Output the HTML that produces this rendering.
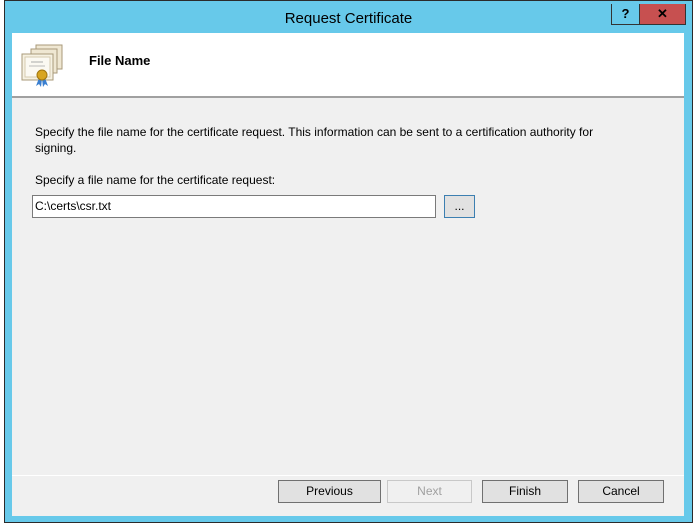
<!DOCTYPE html><html><head><style>
body{margin:0;width:696px;height:530px;background:#fff;position:relative;overflow:hidden;font-family:"Liberation Sans",sans-serif;font-size:12px;color:#000}
.win{position:absolute;left:4px;top:0;width:687px;height:521px;background:#67c9ea;border:1px solid #2b2b2b}
.title{position:absolute;left:0;top:9px;width:687px;text-align:center;font-size:15px;color:#000}
.help{position:absolute;left:606px;top:3px;width:27px;height:20px;border:1px solid #333;border-top:none;text-align:center;font-weight:bold;font-size:13px;line-height:20px}
.close{position:absolute;left:634px;top:3px;width:45px;height:20px;background:#c75050;border:1px solid #333;border-top:none;text-align:center;font-weight:bold;font-size:13px;line-height:20px}
.client{position:absolute;left:12px;top:33px;width:672px;height:483px;background:#f0f0f0}
.hdr{position:absolute;left:0;top:0;width:672px;height:63px;background:#fff;border-bottom:2px solid #a0a0a0}
.t{position:absolute;white-space:nowrap}
.btn{position:absolute;top:447px;height:21px;border:1px solid #707070;background:#e1e1e1;text-align:center;line-height:21px}
</style></head><body>
<div class="win">
<div class="title">Request Certificate</div>
<div class="help">?</div><div class="close">✕</div>
</div>
<div class="client">
<div class="hdr">
<svg style="position:absolute;left:7px;top:11px" width="50" height="44" viewBox="0 0 50 44">
<rect x="17" y="1" width="26" height="24" fill="#efe7d2" stroke="#a89a7a"/>
<rect x="12" y="5" width="26" height="24" fill="#efe7d2" stroke="#a89a7a"/>
<rect x="3" y="10" width="31" height="26" fill="#f6f1e2" stroke="#a89a7a"/>
<rect x="6" y="13" width="25" height="20" fill="#fbf9f2" stroke="#d6cbb0"/>
<line x1="12" y1="18" x2="24" y2="18" stroke="#aaa"/><line x1="10" y1="22" x2="26" y2="22" stroke="#bbb"/>
<path d="M20 34 l-3 8 l3-2 l2 3 l1-8z M26 34 l3 8 l-3-2 l-2 3 l-1-8z" fill="#3a7fd0"/>
<circle cx="23" cy="31" r="5" fill="#d8a520" stroke="#a0750f"/>
</svg>
<div class="t" style="left:77px;top:20px;font-weight:bold;font-size:13px">File Name</div>
</div>
<div class="t" style="left:23px;top:92px">Specify the file name for the certificate request. This information can be sent to a certification authority for</div>
<div class="t" style="left:23px;top:108px">signing.</div>
<div class="t" style="left:23px;top:140px">Specify a file name for the certificate request:</div>
<div style="position:absolute;left:20px;top:162px;width:400px;height:21px;background:#fff;border:1px solid #7a7a7a;line-height:21px;padding-left:2px">C:\certs\csr.txt</div>
<div style="position:absolute;left:432px;top:162px;width:29px;height:21px;background:#e1e1e1;border:1px solid #3c7fb1;text-align:center;line-height:21px">...</div>
<div style="position:absolute;left:0;top:442px;width:672px;height:1px;background:#fff"></div>
<div class="btn" style="left:266px;width:101px">Previous</div>
<div class="btn" style="left:375px;width:83px;color:#a0a0a0;border-color:#c8c8c8;background:#f0f0f0">Next</div>
<div class="btn" style="left:470px;width:84px">Finish</div>
<div class="btn" style="left:566px;width:84px">Cancel</div>
</div>
</body></html>
